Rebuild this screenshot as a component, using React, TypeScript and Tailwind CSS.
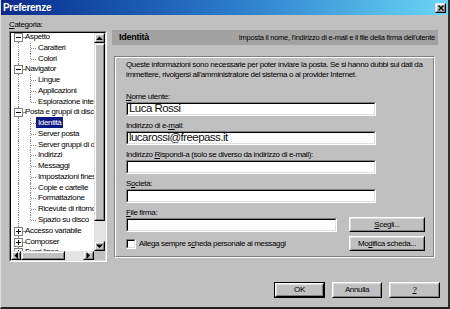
import React from "react";

function Sunken({ className = "", inner = "bg-white", children }: { className?: string; inner?: string; children?: React.ReactNode }) {
  return (
    <div className={`border border-t-[#808080] border-l-[#808080] border-b-white border-r-white ${className}`}>
      <div className={`h-full w-full border border-t-black border-l-black border-b-[#dfdfdf] border-r-[#dfdfdf] ${inner}`}>{children}</div>
    </div>
  );
}

function Btn({ className = "", def = false, children }: { className?: string; def?: boolean; children?: React.ReactNode }) {
  return (
    <div className={`${def ? "border border-black" : ""} ${className}`}>
      <div className="h-full border border-t-white border-l-white border-b-black border-r-black">
        <div className="h-full border border-t-[#dfdfdf] border-l-[#dfdfdf] border-b-[#808080] border-r-[#808080] bg-[#c0c0c0] flex items-center justify-center leading-none whitespace-nowrap">
          {children}
        </div>
      </div>
    </div>
  );
}

function Raised({ className = "", children }: { className?: string; children?: React.ReactNode }) {
  return (
    <div className={`border border-t-[#dfdfdf] border-l-[#dfdfdf] border-b-black border-r-black ${className}`}>
      <div className="h-full w-full border border-t-white border-l-white border-b-[#808080] border-r-[#808080] bg-[#c0c0c0] flex items-center justify-center">
        {children}
      </div>
    </div>
  );
}

type Row = { label: string; root?: boolean; open?: boolean; sel?: boolean; lastChild?: boolean };

const rows: Row[] = [
  { label: "Aspetto", root: true, open: true },
  { label: "Caratteri" },
  { label: "Colori", lastChild: true },
  { label: "Navigator", root: true, open: true },
  { label: "Lingue" },
  { label: "Applicazioni" },
  { label: "Esplorazione intelligente", lastChild: true },
  { label: "Posta e gruppi di discussione", root: true, open: true },
  { label: "Identità", sel: true },
  { label: "Server posta" },
  { label: "Server gruppi di discussione" },
  { label: "Indirizzi" },
  { label: "Messaggi" },
  { label: "Impostazioni finestra" },
  { label: "Copie e cartelle" },
  { label: "Formattazione" },
  { label: "Ricevute di ritorno" },
  { label: "Spazio su disco", lastChild: true },
  { label: "Accesso variabile", root: true },
  { label: "Composer", root: true },
  { label: "Fuori linea", root: true },
];

function ExpandBox({ open }: { open?: boolean }) {
  return (
    <svg width="9" height="9" viewBox="0 0 9 9" className="absolute left-[3px] top-[1px]">
      <rect x="0.5" y="0.5" width="8" height="8" fill="white" stroke="#808080" />
      <line x1="2" y1="4.5" x2="7" y2="4.5" stroke="black" />
      {!open && <line x1="4.5" y1="2" x2="4.5" y2="7" stroke="black" />}
    </svg>
  );
}

function TreeRow({ r, idx }: { r: Row; idx: number }) {
  return (
    <div className="relative h-[10.78px] whitespace-nowrap">
      <span className={`absolute left-[7px] w-0 border-l border-dotted border-[#909090] ${idx === 0 ? "top-[5px] bottom-0" : "top-0 bottom-0"}`} />
      {r.root ? (
        <>
          <span className="absolute left-[12px] top-[5px] w-[2px] h-0 border-t border-dotted border-[#909090]" />
          <ExpandBox open={r.open} />
          <span className="absolute left-[12px] top-[-1px] px-[2px] leading-[11px]">{r.label}</span>
        </>
      ) : (
        <>
          <span className={`absolute left-[19px] w-0 border-l border-dotted border-[#909090] ${r.lastChild ? "top-0 h-[5px]" : "top-0 bottom-0"}`} />
          <span className="absolute left-[20px] top-[5px] w-[5px] h-0 border-t border-dotted border-[#909090]" />
          <span className={`absolute left-[25px] top-[-1px] px-[2px] leading-[11px] ${r.sel ? "bg-[#0a1a84] text-white" : ""}`}>{r.label}</span>
        </>
      )}
    </div>
  );
}

function Tri({ dir }: { dir: "up" | "down" | "left" | "right" }) {
  const vertical = dir === "up" || dir === "down";
  const pts = {
    up: "0,4 3.5,0.5 7,4",
    down: "0,0.5 3.5,4 7,0.5",
    left: "4,0 0.5,3.5 4,7",
    right: "0.5,0 4,3.5 0.5,7",
  }[dir];
  return (
    <svg width={vertical ? 7 : 4.5} height={vertical ? 4.5 : 7} viewBox={vertical ? "0 0 7 4.5" : "0 0 4.5 7"}>
      <polygon points={pts} fill="black" />
    </svg>
  );
}

function Tree() {
  return (
    <Sunken className="w-[98px] h-[231px]" inner="bg-white flex flex-col">
      <div className="flex flex-1 min-h-0">
        <div className="flex-1 overflow-hidden">
          <div className="mt-[-1px]">
            {rows.map((r, i) => (
              <TreeRow key={i} r={r} idx={i} />
            ))}
          </div>
        </div>
        <div className="w-[11px] flex flex-col">
          <Raised className="h-[10px]"><Tri dir="up" /></Raised>
          <Raised className="h-[178px]" />
          <div className="flex-1 bg-[#e4e4e4]" />
          <Raised className="h-[10px]"><Tri dir="down" /></Raised>
        </div>
      </div>
      <div className="h-[9px] flex">
        <Raised className="w-[10px]"><Tri dir="left" /></Raised>
        <Raised className="w-[44px]" />
        <div className="flex-1 bg-[#e4e4e4]" />
        <Raised className="w-[11px]"><Tri dir="right" /></Raised>
        <div className="w-[11px] bg-[#c0c0c0]" />
      </div>
    </Sunken>
  );
}

function Field({ label, value, className = "w-[250px]" }: { label: React.ReactNode; value?: string; className?: string }) {
  return (
    <div className="flex flex-col">
      <div className="h-[10px] leading-[10px] whitespace-nowrap">{label}</div>
      <Sunken className={`h-[14px] ${className}`} inner="bg-white flex items-center">
        {value && (
          <span className="pl-[1px] text-[11.5px] tracking-[-0.55px] leading-none text-[#111]">{value}</span>
        )}
      </Sunken>
    </div>
  );
}

export default function App() {
  return (
    <div className="w-[450px] h-[309px] bg-[#c0c0c0] flex flex-col border-l border-l-[#dfdfdf] border-b-2 border-b-[#202020] border-r-2 border-r-[#303030] overflow-hidden text-black text-[8px] tracking-[-0.35px] font-['Liberation_Sans','Arial',sans-serif]">
      {/* title bar */}
      <div className="h-[15px] shrink-0 flex items-center bg-gradient-to-r from-[#0c2a8c] via-[#2a78c8] to-[#6ad6f6]">
        <span className="pl-[2px] text-white font-bold text-[10px] tracking-[-0.3px] leading-none">Preferenze</span>
        <Raised className="ml-auto mr-[2px] w-[11px] h-[10px]">
          <svg width="6" height="6" viewBox="0 0 6 6">
            <path d="M0.5 0.5 L5.5 5.5 M5.5 0.5 L0.5 5.5" stroke="black" strokeWidth="1.4" />
          </svg>
        </Raised>
      </div>

      <div className="flex pl-[8px]">
        {/* left column */}
        <div className="w-[98px] flex flex-col">
          <div className="h-[16px] pt-[5px] leading-[9px]">
            <span className="underline">C</span>ategoria:
          </div>
          <Tree />
        </div>

        {/* right column */}
        <div className="ml-[5px] mt-[15px] w-[326px] flex flex-col">
          <div className="h-[15px] bg-[#a2a2a2] flex items-center justify-between pl-[7px] pr-[3px] whitespace-nowrap">
            <span className="font-bold text-[9px] tracking-[-0.25px] leading-none">Identità</span>
            <span className="text-[7.5px] tracking-[-0.25px] leading-none">Imposta il nome, l'indirizzo di e-mail e il file della firma dell'utente</span>
          </div>

          <div className="mt-[11px] ml-[2px] w-[321px] h-[202px] border border-t-[#808080] border-l-[#808080] border-b-white border-r-white">
            <div className="h-full border border-t-white border-l-white border-b-[#808080] border-r-[#808080] pl-[10px] pt-[2px] flex flex-col">
              <p className="leading-[10px] whitespace-nowrap">
                Queste informazioni sono necessarie per poter inviare la posta. Se si hanno dubbi sui dati da
                <br />
                immettere, rivolgersi all'amministratore del sistema o al provider Internet.
              </p>

              <div className="mt-[12px] flex flex-col gap-[5px]">
                <Field label={<><span className="underline">N</span>ome utente:</>} value="Luca Rossi" />
                <Field label={<>Indirizzo di e-<span className="underline">m</span>ail:</>} value="lucarossi@freepass.it" />
                <Field label={<>Indirizzo <span className="underline">R</span>ispondi-a (solo se diverso da indirizzo di e-mail):</>} />
                <Field label={<>S<span className="underline">o</span>cietà:</>} />
                <div className="flex items-end">
                  <Field label={<><span className="underline">F</span>ile firma:</>} className="w-[211px]" />
                  <Btn className="ml-[12px] w-[76px] h-[15px]">
                    <span><span className="underline">S</span>cegli...</span>
                  </Btn>
                </div>
              </div>

              <div className="mt-[4px] flex items-center h-[15px]">
                <Sunken className="w-[10px] h-[10px]" />
                <span className="ml-[3px] w-[210px] whitespace-nowrap leading-none">
                  Allega sempre s<span className="underline">c</span>heda personale ai messaggi
                </span>
                <Btn className="w-[76px] h-[15px]">
                  <span>Mo<span className="underline">d</span>ifica scheda...</span>
                </Btn>
              </div>
            </div>
          </div>
        </div>
      </div>

      <div className="mt-auto mb-[9px] flex justify-end gap-[7px] pr-[8px]">
        <Btn def className="w-[51px] h-[16px]">OK</Btn>
        <Btn className="w-[50px] h-[16px]">Annulla</Btn>
        <Btn className="w-[51px] h-[16px]"><span className="underline">?</span></Btn>
      </div>
    </div>
  );
}
